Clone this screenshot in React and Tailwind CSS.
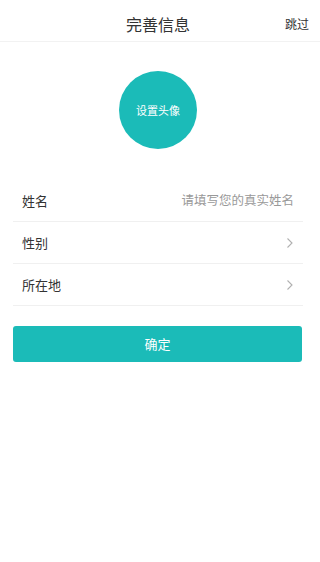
import React from 'react';

const font = { fontFamily: '"Noto Sans CJK SC", "Noto Sans", sans-serif' };

const Chevron = () => (
    <svg width="8" height="12" viewBox="0 0 8 12" fill="none">
        <path d="M1.5 1.5L6 6l-4.5 4.5" stroke="#b0b0b0" strokeWidth="1.1" />
    </svg>
);

const Row = ({ label, children }) => (
    <div className="flex items-center justify-between h-[42px] pl-[9px] pr-[9px] border-b border-[#f0f0f0]">
        <span className="text-[13px] text-[#333]">{label}</span>
        {children}
    </div>
);

export default function App() {
    return (
        <div className="w-[320px] h-[562px] bg-white" style={font}>
            {/* header */}
            <div className="relative flex items-center justify-center h-[42px] pt-[6px] border-b border-[#f2f2f2]">
                <span className="text-[16px] text-[#333] mr-[4px]">完善信息</span>
                <span className="absolute right-[11px] top-[15px] text-[12px] text-[#333]">跳过</span>
            </div>

            {/* avatar */}
            <div className="flex justify-center pt-[29px] pr-[4px]">
                <div className="w-[78px] h-[78px] rounded-full bg-[#1bbbb8] flex items-center justify-center">
                    <span className="text-[11px] text-white">设置头像</span>
                </div>
            </div>

            {/* form */}
            <div className="mt-[31px] mx-[13px] w-[290px]">
                <Row label="姓名">
                    <span className="text-[12.5px] text-[#999]">请填写您的真实姓名</span>
                </Row>
                <Row label="性别">
                    <Chevron />
                </Row>
                <Row label="所在地">
                    <Chevron />
                </Row>
            </div>

            <div className="mx-[13px] mt-[20px] w-[289px]">
                <button className="w-full h-[36px] rounded-[3px] bg-[#1bbbb8] text-white text-[13px]">
                    确定
                </button>
            </div>
        </div>
    );
}
